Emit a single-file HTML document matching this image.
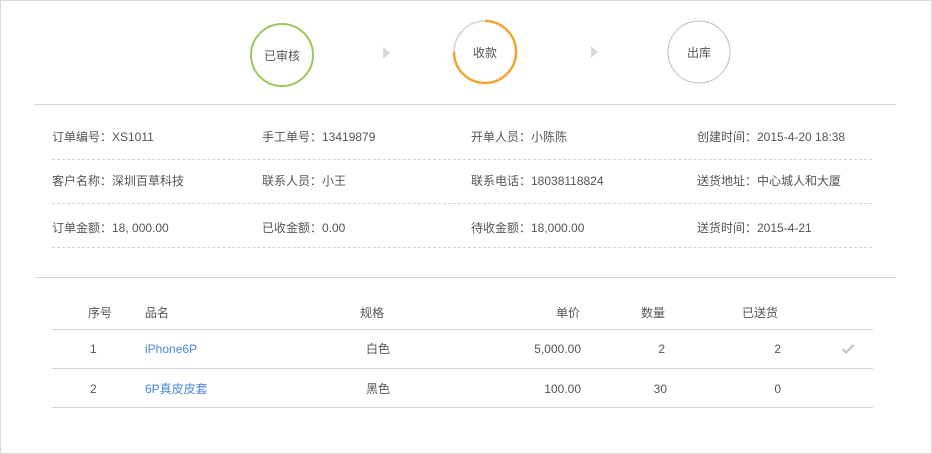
<!DOCTYPE html>
<html><head><meta charset="utf-8"><style>
*{margin:0;padding:0;box-sizing:border-box}
body{width:932px;height:454px;background:#fff;font-family:"Liberation Sans","Noto Sans CJK SC",sans-serif;font-size:12px;line-height:16px;color:#555;position:relative;overflow:hidden}
.frame{position:absolute;left:0;top:0;width:932px;height:454px;border:1px solid #d8d8d8}
.abs{position:absolute;white-space:nowrap;height:16px;line-height:16px}
.hl{position:absolute;height:1px;background:#d6d6d6}
.dl{position:absolute;left:52px;width:820px;border-top:1px dashed #d6d6d6}
.tl{position:absolute;left:52px;width:821px;height:1px;background:#d6d6d6}
.blue{color:#4a86e0}
</style></head><body>
<div class="frame"></div>
<svg class="abs" style="left:0;top:0;height:100px" width="932" height="100">
<circle cx="282" cy="55" r="31" fill="none" stroke="#9dc55a" stroke-width="2"/>
<circle cx="485" cy="52" r="31" fill="none" stroke="#dcdcdc" stroke-width="2"/>
<path d="M485 21 A31 31 0 1 1 454 52" fill="none" stroke="#f0a530" stroke-width="2.5"/>
<circle cx="699" cy="52" r="31" fill="none" stroke="#bdbdbd" stroke-width="1"/>
<polygon points="383,47 383,59 390,53" fill="#d8d8d8"/>
<polygon points="591,46 591,58 598,52" fill="#d8d8d8"/>
</svg>
<div class="abs" style="left:264px;top:48px">已审核</div>
<div class="abs" style="left:473px;top:45px">收款</div>
<div class="abs" style="left:687px;top:45px">出库</div>
<div class="hl" style="left:35px;top:104px;width:861px"></div>
<div class="abs" style="left:52px;top:129px">订单编号：XS1011</div>
<div class="abs" style="left:262px;top:129px">手工单号：13419879</div>
<div class="abs" style="left:471px;top:129px">开单人员：小陈陈</div>
<div class="abs" style="left:697px;top:129px">创建时间：2015-4-20 18:38</div>
<div class="dl" style="top:159px"></div>
<div class="abs" style="left:52px;top:173px">客户名称：深圳百草科技</div>
<div class="abs" style="left:262px;top:173px">联系人员：小王</div>
<div class="abs" style="left:471px;top:173px">联系电话：18038118824</div>
<div class="abs" style="left:697px;top:173px">送货地址：中心城人和大厦</div>
<div class="dl" style="top:203px"></div>
<div class="abs" style="left:52px;top:220px">订单金额：18, 000.00</div>
<div class="abs" style="left:262px;top:220px">已收金额：0.00</div>
<div class="abs" style="left:471px;top:220px">待收金额：18,000.00</div>
<div class="abs" style="left:697px;top:220px">送货时间：2015-4-21</div>
<div class="dl" style="top:247px"></div>
<div class="hl" style="left:35px;top:277px;width:861px"></div>
<div class="abs" style="left:88px;top:305px">序号</div>
<div class="abs" style="left:145px;top:305px">品名</div>
<div class="abs" style="left:360px;top:305px">规格</div>
<div class="abs" style="left:556px;top:305px">单价</div>
<div class="abs" style="left:641px;top:305px">数量</div>
<div class="abs" style="left:742px;top:305px">已送货</div>
<div class="tl" style="top:329px"></div>
<div class="abs" style="left:90px;top:341px">1</div>
<div class="abs blue" style="left:145px;top:341px">iPhone6P</div>
<div class="abs" style="left:366px;top:341px">白色</div>
<div class="abs" style="left:500px;top:341px;width:81px;text-align:right">5,000.00</div>
<div class="abs" style="left:620px;top:341px;width:45px;text-align:right">2</div>
<div class="abs" style="left:740px;top:341px;width:41px;text-align:right">2</div>
<svg class="abs" style="left:841px;top:343px;height:12px" width="14" height="12"><path d="M1.5 6 L5 9.5 L12.5 2" fill="none" stroke="#c4c4c4" stroke-width="2.2"/></svg>
<div class="tl" style="top:368px"></div>
<div class="abs" style="left:90px;top:381px">2</div>
<div class="abs blue" style="left:145px;top:381px">6P真皮皮套</div>
<div class="abs" style="left:366px;top:381px">黑色</div>
<div class="abs" style="left:500px;top:381px;width:81px;text-align:right">100.00</div>
<div class="abs" style="left:620px;top:381px;width:47px;text-align:right">30</div>
<div class="abs" style="left:740px;top:381px;width:41px;text-align:right">0</div>
<div class="tl" style="top:407px"></div>
</body></html>
